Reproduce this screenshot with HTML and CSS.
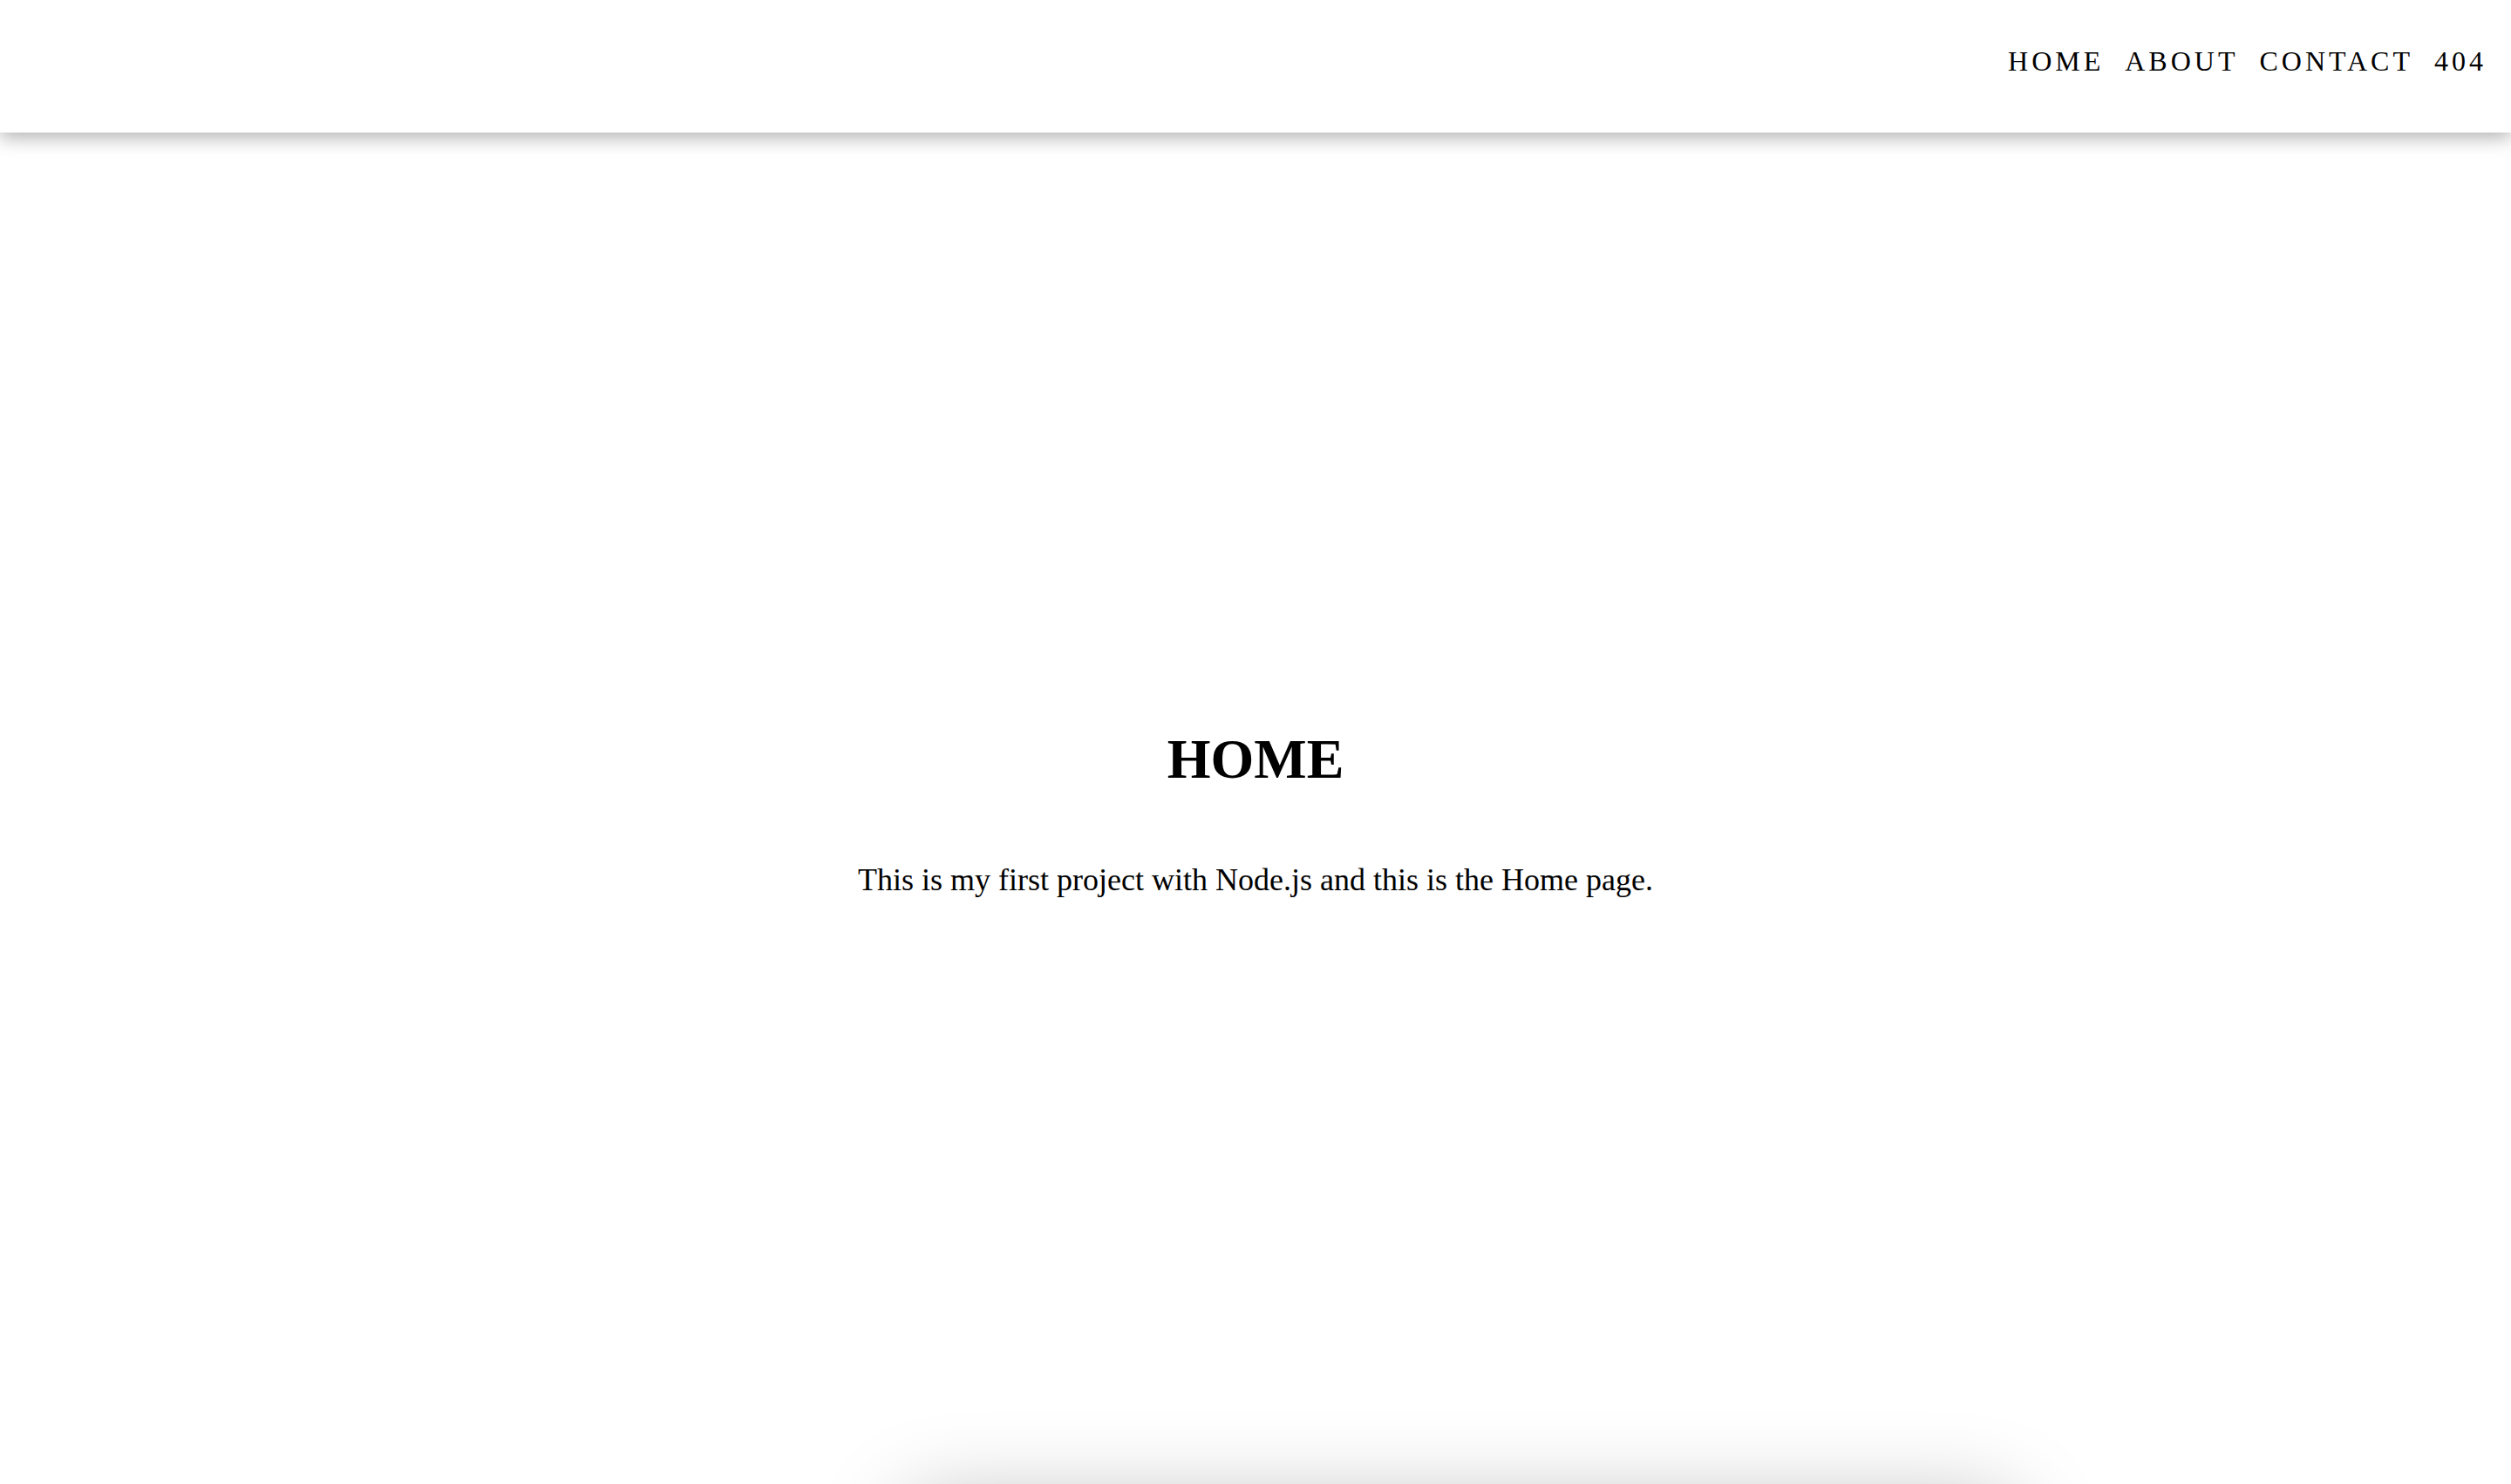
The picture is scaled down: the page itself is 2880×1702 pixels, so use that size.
FILE: index.html
```html
<!DOCTYPE html>
<html lang="en">
<head>
<meta charset="utf-8">
<title>Home</title>
<link rel="stylesheet" href="styles.css">
</head>
<body>
<header class="navbar">
  <nav class="nav-links">
    <a class="nav-link" href="#">HOME</a>
    <a class="nav-link" href="#">ABOUT</a>
    <a class="nav-link" href="#">CONTACT</a>
    <a class="nav-link" href="#">404</a>
  </nav>
</header>
<main class="hero">
  <h1 class="hero-title">HOME</h1>
  <p class="hero-text">This is my first project with Node.js and this is the Home page.</p>
</main>
<section class="card"></section>
</body>
</html>
```
FILE: styles.css
```css
html, body {
  margin: 0;
  padding: 0;
  background: #ffffff;
  font-family: "Liberation Serif", "Times New Roman", serif;
  color: #000;
}

.navbar {
  position: relative;
  z-index: 2;
  height: 152px;
  box-sizing: border-box;
  background: #fff;
  display: flex;
  justify-content: flex-end;
  align-items: flex-start;
  padding: 52px 28px 0 0;
  box-shadow: 0 6px 20px rgba(0, 0, 0, 0.3);
}

.nav-links {
  display: flex;
  gap: 24px;
}

.nav-link {
  font-size: 32px;
  letter-spacing: 4px;
  color: #000;
  text-decoration: none;
  line-height: normal;
}

.hero {
  height: 1560px;
  display: flex;
  flex-direction: column;
  align-items: center;
  justify-content: center;
  text-align: center;
}

.hero-title {
  margin: 0 0 80px;
  font-size: 64px;
  font-weight: bold;
  line-height: normal;
}

.hero-text {
  margin: 0;
  font-size: 36px;
  line-height: normal;
}

.card {
  width: 1270px;
  height: 400px;
  margin-left: 1040px;
  margin-top: 12px;
  background: #fff;
  border-radius: 24px;
  box-shadow: 0 0 100px rgba(0, 0, 0, 0.28);
}
```
